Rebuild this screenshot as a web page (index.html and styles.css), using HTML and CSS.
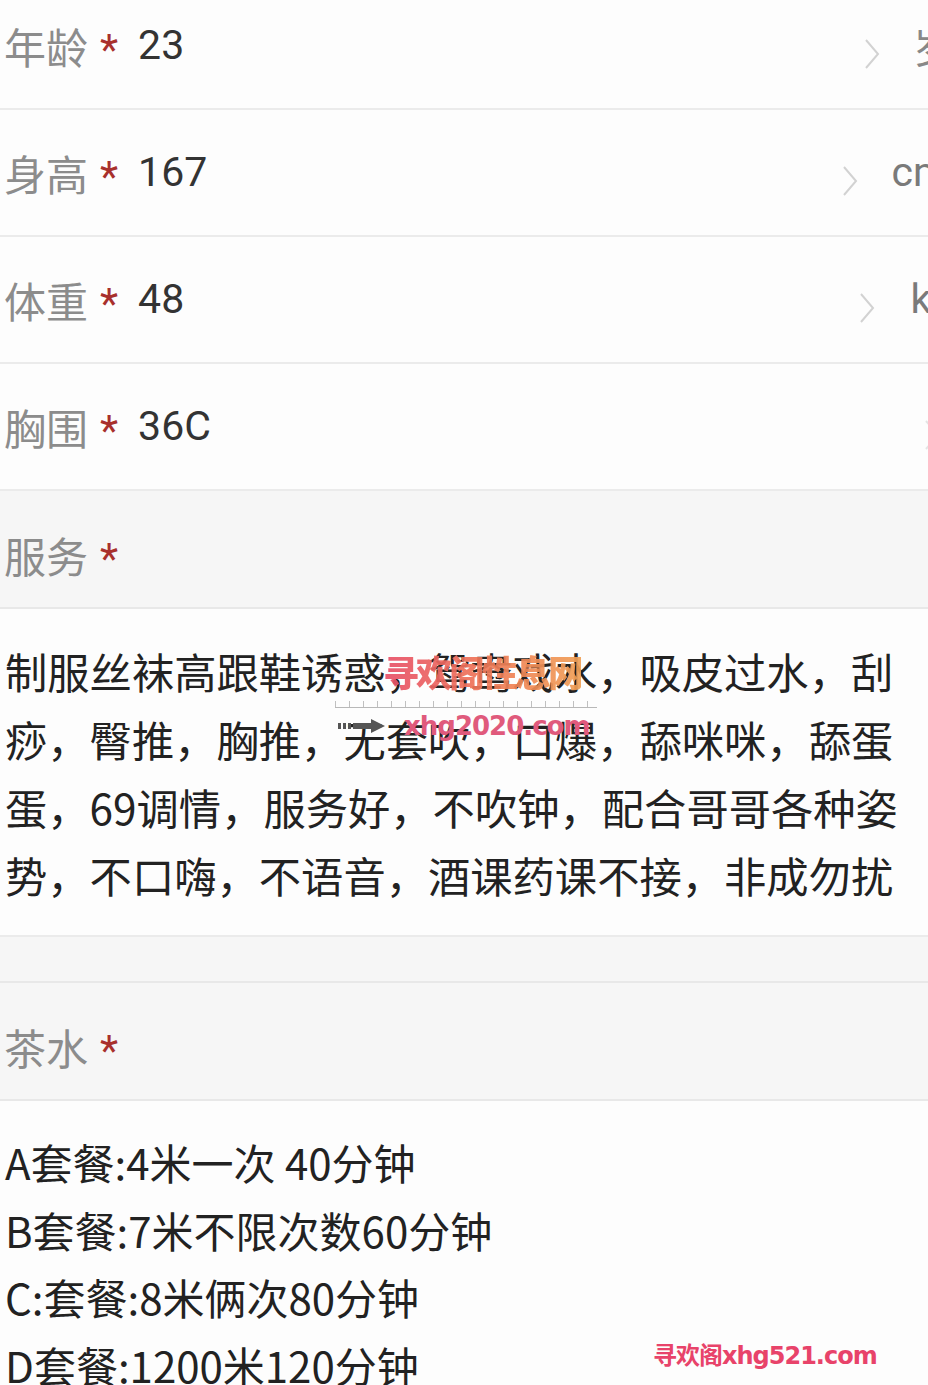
FILE: index.html
```html
<!DOCTYPE html>
<html lang="zh-CN">
<head>
<meta charset="utf-8">
<title>资料</title>
<link rel="stylesheet" href="styles.css">
</head>
<body>
<div class="page">
  <div class="field field-first">
    <span class="label">年龄</span><span class="star">*</span><span class="value">23</span>
    <span class="right right-age">
      <svg class="chev" width="18" height="32" viewBox="0 0 18 32"><polyline points="3,2 15,16 3,30" fill="none" stroke="#d2d2d2" stroke-width="2"/></svg>
      <span class="unit unit-cjk">岁</span>
    </span>
  </div>
  <div class="field">
    <span class="label">身高</span><span class="star">*</span><span class="value">167</span>
    <span class="right right-height">
      <svg class="chev" width="18" height="32" viewBox="0 0 18 32"><polyline points="3,2 15,16 3,30" fill="none" stroke="#d2d2d2" stroke-width="2"/></svg>
      <span class="unit">cm</span>
    </span>
  </div>
  <div class="field">
    <span class="label">体重</span><span class="star">*</span><span class="value">48</span>
    <span class="right right-weight">
      <svg class="chev" width="18" height="32" viewBox="0 0 18 32"><polyline points="3,2 15,16 3,30" fill="none" stroke="#d2d2d2" stroke-width="2"/></svg>
      <span class="unit">kg</span>
    </span>
  </div>
  <div class="field">
    <span class="label">胸围</span><span class="star">*</span><span class="value">36C</span>
    <span class="right right-bust">
      <svg class="chev" width="18" height="32" viewBox="0 0 18 32"><polyline points="3,2 15,16 3,30" fill="none" stroke="#e4e4e4" stroke-width="2"/></svg>
      <span class="unit">cup</span>
    </span>
  </div>

  <div class="section-head">
    <span class="label">服务</span><span class="star">*</span>
  </div>
  <div class="desc">
    <p class="desc-text">制服丝袜高跟鞋诱惑，鸳鸯戏水，吸皮过水，刮<br>痧，臀推，胸推，无套吹，口爆，舔咪咪，舔蛋<br>蛋，69调情，服务好，不吹钟，配合哥哥各种姿<br>势，不口嗨，不语音，酒课药课不接，非成勿扰</p>
    <div class="wm">
      <span class="wm-title">寻欢阁性息网</span>
      <span class="wm-ruler"></span>
      <span class="wm-url">
        <svg class="wm-arrow" width="48" height="14" viewBox="0 0 48 14"><rect x="0" y="4" width="3" height="6" fill="#555"/><rect x="5" y="4" width="3" height="6" fill="#555"/><rect x="10" y="4" width="3" height="6" fill="#555"/><rect x="15" y="4" width="20" height="6" fill="#555"/><polygon points="33,0 47,7 33,14" fill="#555"/></svg>
        <span class="wm-url-text">xhg2020.com</span>
      </span>
    </div>
  </div>

  <div class="gap-band"></div>

  <div class="section-head section-head-tea">
    <span class="label">茶水</span><span class="star">*</span>
  </div>
  <div class="packages">
    <p class="pkg">A套餐:4米一次 40分钟</p>
    <p class="pkg">B套餐:7米不限次数60分钟</p>
    <p class="pkg">C:套餐:8米俩次80分钟</p>
    <p class="pkg">D套餐:1200米120分钟</p>
  </div>

  <div class="wm-bottom">寻欢阁xhg521.com</div>
</div>
</body>
</html>
```

FILE: styles.css
```css
* { box-sizing: border-box; }

html, body {
  margin: 0;
  padding: 0;
  background: #fdfdfd;
}

body {
  width: 928px;
  height: 1385px;
  overflow: hidden;
  font-family: "Roboto", "Noto Sans CJK SC", sans-serif;
}

.page {
  position: relative;
  width: 928px;
  height: 1385px;
  overflow: hidden;
}

.field {
  display: flex;
  align-items: center;
  height: 127px;
  padding-left: 4px;
  background: #fdfdfd;
  border-bottom: 2px solid #ebebeb;
}

.field-first {
  margin-top: -17px;
}

.label {
  font-family: "Noto Sans CJK SC", sans-serif;
  font-size: 42px;
  color: #8c8c8c;
  line-height: 1;
}

.star {
  font-family: "Roboto", sans-serif;
  font-size: 42px;
  color: #a8302c;
  margin-left: 12px;
  line-height: 1;
  position: relative;
  top: 4px;
}

.value {
  font-family: "Roboto", "Noto Sans CJK SC", sans-serif;
  font-size: 41px;
  color: #333;
  margin-left: 20px;
  line-height: 1;
}

.right {
  margin-left: auto;
  display: flex;
  align-items: center;
  gap: 32px;
}

.chev {
  display: block;
  position: relative;
  top: 8px;
}

.unit {
  font-family: "Roboto", sans-serif;
  font-size: 41px;
  color: #7a7a7a;
  line-height: 1;
}

.unit-cjk {
  font-family: "Noto Sans CJK SC", sans-serif;
  color: #888;
}

.right-age { margin-right: -26px; }
.right-height { margin-right: -21px; gap: 33px; }
.right-weight { margin-right: -26px; gap: 35px; }
.right-bust { margin-right: -120px; gap: 40px; }

.section-head {
  display: flex;
  align-items: center;
  height: 118px;
  padding: 12px 0 0 4px;
  background: #f6f6f6;
  border-bottom: 2px solid #e8e8e8;
}

.desc {
  position: relative;
  background: #fdfdfd;
  padding: 28px 0 26px 5px;
  border-bottom: 2px solid #ebebeb;
}

.desc-text {
  margin: 0;
  font-family: "Noto Sans CJK SC", sans-serif;
  font-size: 42.3px;
  line-height: 68px;
  color: #222;
  white-space: nowrap;
}

.wm {
  position: absolute;
  left: 335px;
  top: 40px;
  width: 265px;
  height: 90px;
}

.wm-title {
  position: absolute;
  left: 48px;
  top: 0;
  font-family: "Noto Sans CJK SC", sans-serif;
  font-weight: 900;
  font-size: 36px;
  line-height: 44px;
  letter-spacing: -3px;
  background: linear-gradient(90deg, #e8506a 0%, #ef7758 50%, #f0a055 100%);
  -webkit-background-clip: text;
  background-clip: text;
  color: transparent;
  opacity: 0.92;
}

.wm-ruler {
  position: absolute;
  left: 0;
  top: 52px;
  width: 262px;
  height: 7px;
  border-bottom: 1px solid #b8b8b8;
  background: repeating-linear-gradient(90deg, #c0c0c0 0 1px, transparent 1px 14px);
}

.wm-url {
  position: absolute;
  left: 3px;
  top: 62px;
  display: flex;
  align-items: center;
  gap: 18px;
}

.wm-arrow {
  display: block;
}

.wm-url-text {
  font-family: "DejaVu Sans", sans-serif;
  font-weight: 700;
  font-size: 26px;
  line-height: 30px;
  letter-spacing: -1px;
  color: #e05a7c;
}

.gap-band {
  height: 46px;
  background: #f6f6f6;
  border-bottom: 2px solid #e8e8e8;
}

.section-head-tea {
  height: 118px;
}

.packages {
  background: #fdfdfd;
  padding: 27px 0 0 5px;
}

.pkg {
  margin: 0;
  font-family: "Noto Sans CJK SC", sans-serif;
  font-size: 42px;
  line-height: 67.5px;
  color: #222;
  white-space: nowrap;
}

.wm-bottom {
  position: absolute;
  left: 653px;
  top: 1338px;
  font-family: "DejaVu Sans", "Noto Sans CJK SC", sans-serif;
  font-weight: 700;
  font-size: 24px;
  line-height: 36px;
  letter-spacing: -1px;
  color: #e8436a;
}
```
